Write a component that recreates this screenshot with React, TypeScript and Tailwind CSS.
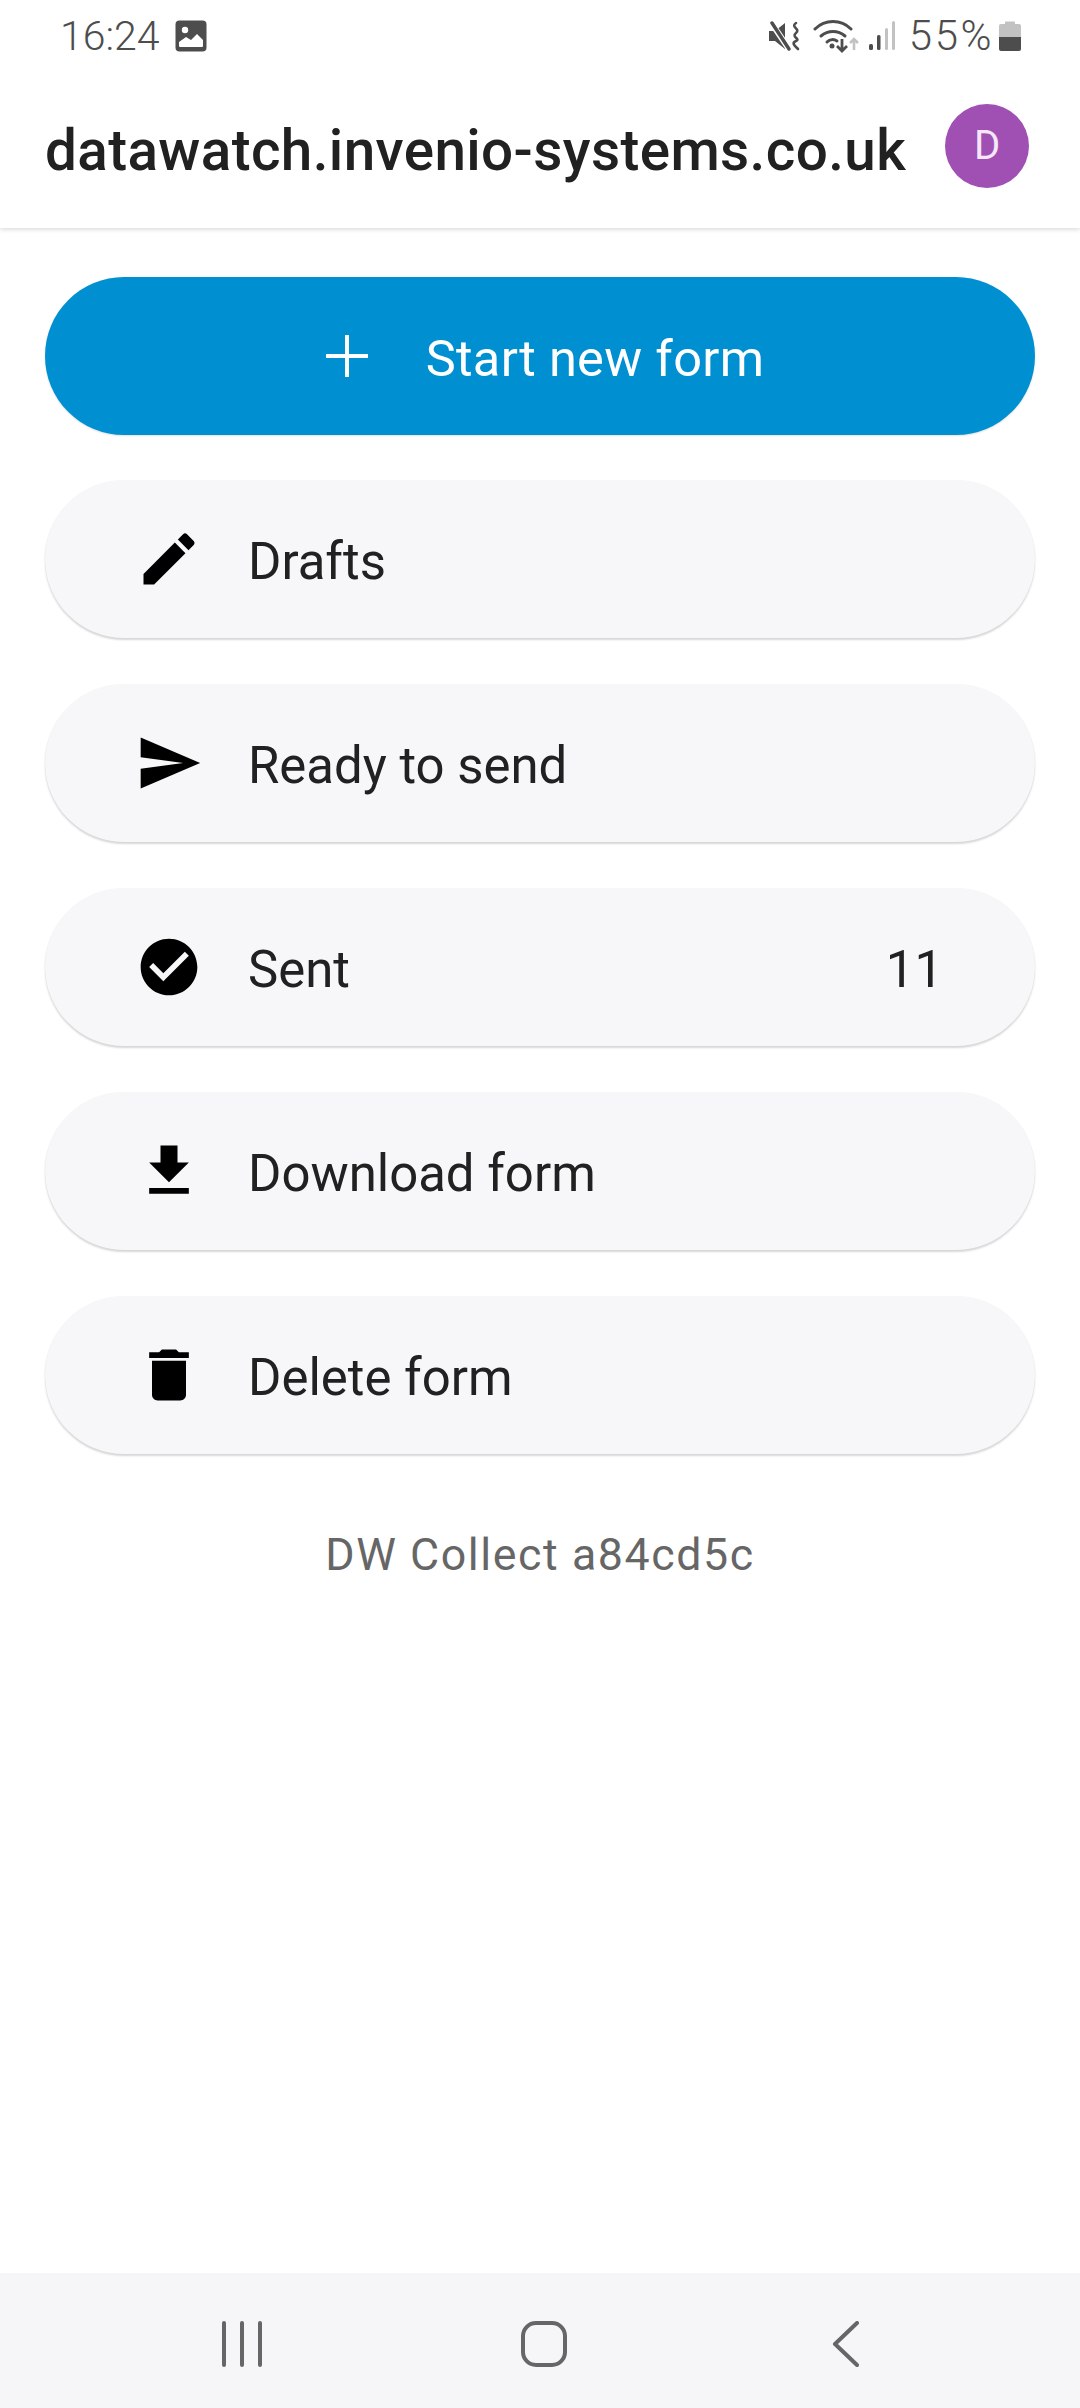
import React from "react";

const rowShadow = "shadow-[0_2px_2px_rgba(0,0,0,0.16),0_0_1px_rgba(0,0,0,0.05)]";

function Icon({ d }: { d: string }) {
  return (
    <svg viewBox="0 0 24 24" className="w-[68px] h-[68px] shrink-0" fill="#000">
      <path d={d} />
    </svg>
  );
}

const rows = [
  { label: "Drafts", d: "M3 17.25V21h3.75L17.81 9.94l-3.75-3.75L3 17.25zM20.71 7.04c.39-.39.39-1.02 0-1.41l-2.34-2.34a.9959.9959 0 0 0-1.41 0l-1.83 1.83 3.75 3.75 1.83-1.83z" },
  { label: "Ready to send", d: "M2.01 21 23 12 2.01 3 2 10l15 2-15 2z" },
  { label: "Sent", count: "11", d: "M12 2C6.48 2 2 6.48 2 12s4.48 10 10 10 10-4.48 10-10S17.52 2 12 2zm-2 15-5-5 1.41-1.41L10 14.17l7.59-7.59L19 8l-9 9z" },
  { label: "Download form", d: "M19 9h-4V3H9v6H5l7 7 7-7zM5 18v2h14v-2H5z" },
  { label: "Delete form", d: "M6 19c0 1.1.9 2 2 2h8c1.1 0 2-.9 2-2V7H6v12zM19 4h-3.5l-1-1h-5l-1 1H5v2h14V4z" },
];

function StatusIcons() {
  return (
    <div className="flex items-center">
      <svg width="31" height="30" viewBox="0 0 31 30" className="mr-[13px]">
        <path d="M0 10h6l10-8v26L6 20H0z" fill="#4d4d4d" />
        <path d="M1 0l19 28" stroke="#fff" strokeWidth="6" />
        <path d="M3 2l17 26" stroke="#4d4d4d" strokeWidth="3.4" strokeLinecap="round" />
        <path d="M27 2c-6 4 5 6 0 10s5 6 0 8-1 5 2 8" stroke="#4d4d4d" strokeWidth="2.6" fill="none" strokeLinecap="round" />
      </svg>
      <svg width="46" height="36" viewBox="0 0 46 36" className="mr-[9px]">
        <g fill="none" stroke="#4d4d4d" strokeWidth="3" strokeLinecap="round">
          <path d="M2 11c10-10 26-10 36 0" />
          <path d="M8 18c7-6 17-6 24 0" />
          <path d="M14 24c3-3 7-3 10-1" />
        </g>
        <circle cx="19" cy="28" r="2.5" fill="#4d4d4d" />
        <path d="M29 21v12m-5-5 5 5 5-5" fill="none" stroke="#4d4d4d" strokeWidth="2.8" />
        <path d="M41 32V21m-4 4 4-4 4 4" fill="none" stroke="#c2c2c2" strokeWidth="2.6" />
      </svg>
      <svg width="28" height="32" viewBox="0 0 28 32" className="mr-[13px]">
        <rect x="1" y="24" width="4" height="6" rx="1.5" fill="#4d4d4d" />
        <rect x="9" y="15" width="3.5" height="15" rx="1.5" fill="#4d4d4d" />
        <rect x="17" y="8" width="3" height="22" rx="1.5" fill="#c2c2c2" />
        <rect x="24" y="1" width="3" height="29" rx="1.5" fill="#c2c2c2" />
      </svg>
      <span className="text-[42px] leading-none text-[#4d4d4d] font-light tracking-[2.5px] mr-[5px]">55%</span>
      <svg width="22" height="32" viewBox="0 0 22 32">
        <path d="M6 2.5a1 1 0 0 1 1-1h8a1 1 0 0 1 1 1V4h4a2 2 0 0 1 2 2v12H0V6a2 2 0 0 1 2-2h4z" fill="#c2c2c2" />
        <path d="M0 17h22v12a2 2 0 0 1-2 2H2a2 2 0 0 1-2-2z" fill="#4d4d4d" />
      </svg>
    </div>
  );
}

export default function App() {
  return (
    <div className="w-[1080px] h-[2408px] flex flex-col bg-white overflow-hidden [font-family:Roboto,sans-serif]">
      <div className="relative z-10 h-[228px] shrink-0 bg-white shadow-[0_1px_5px_rgba(0,0,0,0.18)] flex flex-col">
        <div className="h-[70px] flex items-center justify-between pl-[60px] pr-[59px] pt-[2px]">
          <div className="flex items-center">
            <span className="text-[41px] leading-none text-[#4d4d4d] font-light">16:24</span>
            <svg width="32" height="32" viewBox="0 0 32 32" className="ml-[15px]">
              <rect width="31" height="31" x="0.5" y="0.5" rx="4" fill="#4d4d4d" />
              <circle cx="10" cy="10" r="3.2" fill="#fff" />
              <path d="M4 26v-4l7-5 5 3 6-6 6 6v6a1 1 0 0 1-1 1H5a1 1 0 0 1-1-1z" fill="#fff" />
            </svg>
          </div>
          <StatusIcons />
        </div>
        <div className="flex-1 flex items-center justify-between pl-[45px] pr-[51px] pb-[6px]">
          <span className="text-[56.6px] leading-none font-medium text-[#212121] tracking-[0.4px] pt-[10px]">datawatch.invenio-systems.co.uk</span>
          <div className="w-[84px] h-[84px] rounded-full bg-[#a04fb3] flex items-center justify-center text-[40px] text-[#f5e6f8]">D</div>
        </div>
      </div>

      <main className="flex-1 flex flex-col px-[45px] pt-[49px]">
        <div className="h-[158px] rounded-[79px] bg-[#0090d2] flex items-center justify-center pl-[10px] text-white text-[50.5px] tracking-[0.3px] shadow-[0_1px_2px_rgba(0,0,0,0.12)]">
          <svg width="42" height="42" viewBox="0 0 42 42" className="mr-[58px]" stroke="#fff" strokeWidth="4">
            <path d="M21 0v42M0 21h42" />
          </svg>
          <span className="pt-[6px]">Start new form</span>
        </div>
        <div className="flex flex-col gap-[46px] mt-[45px]">
          {rows.map((r) => (
            <div key={r.label} className={`h-[158px] rounded-[79px] bg-[#f7f7f9] flex items-center pl-[90px] pr-[92px] text-[50.9px] text-[#212121] ${rowShadow}`}>
              <Icon d={r.d} />
              <span className="ml-[45px] flex-1 pt-[6px]">{r.label}</span>
              {r.count && <span className="pt-[6px]">{r.count}</span>}
            </div>
          ))}
        </div>
        <div className="mt-[76px] text-center text-[44.7px] leading-[50px] tracking-[1.6px] text-[#666666]">DW Collect a84cd5c</div>
      </main>

      <nav className="h-[135px] shrink-0 bg-[#f6f6f8] flex items-start relative">
        <div className="flex w-full pt-[48px]">
          <div className="w-[157px] shrink-0" />
          <svg width="134" height="46" viewBox="0 0 134 46">
            <g stroke="#666" strokeWidth="4" strokeLinecap="round">
              <path d="M67 2v42M85 2v42M103 2v42" />
            </g>
          </svg>
          <div className="w-[229px] shrink-0" />
          <svg width="48" height="46" viewBox="0 0 48 46">
            <rect x="3" y="2" width="42" height="42" rx="13" fill="none" stroke="#666" strokeWidth="4" />
          </svg>
          <div className="w-[264px] shrink-0" />
          <svg width="28" height="46" viewBox="0 0 28 46">
            <path d="M25 2 3 23l22 21" fill="none" stroke="#666" strokeWidth="4" strokeLinecap="round" strokeLinejoin="round" />
          </svg>
        </div>
      </nav>
    </div>
  );
}
